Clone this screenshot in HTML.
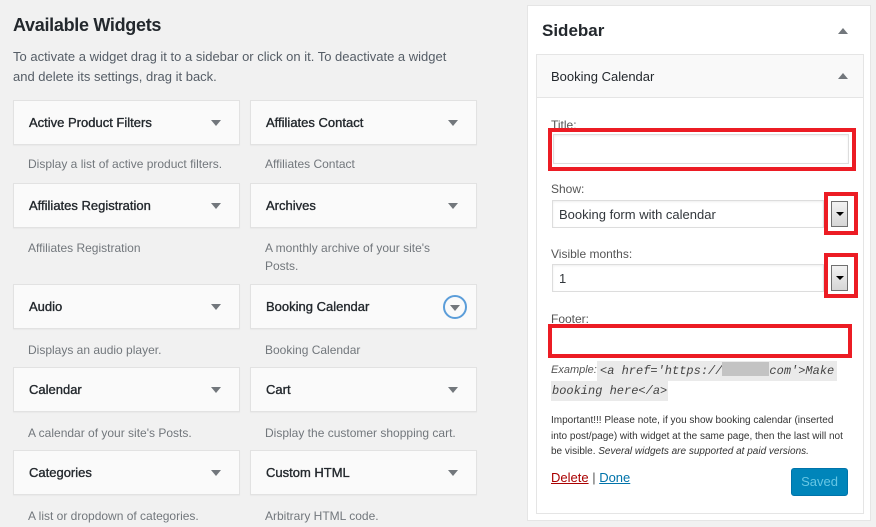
<!DOCTYPE html>
<html><head><meta charset="utf-8"><style>
*{margin:0;padding:0;box-sizing:border-box}
body{width:876px;height:527px;background:#f1f1f1;font-family:"Liberation Sans",sans-serif;color:#23282d;position:relative;overflow:hidden}
.a{position:absolute;white-space:nowrap}
.w{position:absolute;width:227px;height:45px;background:#fafafa;border:1px solid #e2e2e2;box-shadow:0 1px 1px rgba(0,0,0,.04)}
.w span{position:absolute;left:15px;top:14px;font-size:13px;font-weight:normal;color:#23282d;-webkit-text-stroke:0.35px #23282d}
.w i{position:absolute;right:18px;top:19px;width:0;height:0;border-left:5px solid transparent;border-right:5px solid transparent;border-top:6px solid #72777c}
.d{position:absolute;font-size:12px;color:#72777c;line-height:18px}
.red{position:absolute;border:4px solid #ec1c24}
.inp{position:absolute;background:#fff;border:1px solid #ddd;box-shadow:inset 0 1px 2px rgba(0,0,0,.07)}
.lbl{position:absolute;font-size:12px;color:#555}
.btn{position:absolute;width:17px;height:26px;border:1px solid #707070;background:linear-gradient(#f2f2f2,#d6d6d6)}
.btn:after{content:"";position:absolute;left:4px;top:10px;border-left:4px solid transparent;border-right:4px solid transparent;border-top:4px solid #000}
</style></head><body>
<div class="a" style="left:13px;top:15px;font-size:18px;font-weight:bold;letter-spacing:-.3px">Available Widgets</div>
<div class="a" style="left:13px;top:47px;font-size:13px;color:#555d66;line-height:20px">To activate a widget drag it to a sidebar or click on it. To deactivate a widget<br>and delete its settings, drag it back.</div>

<div class="w" style="left:13px;top:100px"><span>Active Product Filters</span><i></i></div>
<div class="w" style="left:250px;top:100px"><span>Affiliates Contact</span><i></i></div>
<div class="d" style="left:28px;top:155px">Display a list of active product filters.</div>
<div class="d" style="left:265px;top:155px">Affiliates Contact</div>

<div class="w" style="left:13px;top:183px"><span>Affiliates Registration</span><i></i></div>
<div class="w" style="left:250px;top:183px"><span>Archives</span><i></i></div>
<div class="d" style="left:28px;top:239px">Affiliates Registration</div>
<div class="d" style="left:265px;top:239px">A monthly archive of your site's<br>Posts.</div>

<div class="w" style="left:13px;top:284px"><span>Audio</span><i></i></div>
<div class="w" style="left:250px;top:284px"><span>Booking Calendar</span><b style="position:absolute;right:9px;top:10px;width:24px;height:24px;border:2px solid #5b9dd9;border-radius:50%"><i style="right:5px;top:8px"></i></b></div>
<div class="d" style="left:28px;top:341px">Displays an audio player.</div>
<div class="d" style="left:265px;top:341px">Booking Calendar</div>

<div class="w" style="left:13px;top:367px"><span>Calendar</span><i></i></div>
<div class="w" style="left:250px;top:367px"><span>Cart</span><i></i></div>
<div class="d" style="left:28px;top:424px">A calendar of your site's Posts.</div>
<div class="d" style="left:265px;top:424px">Display the customer shopping cart.</div>

<div class="w" style="left:13px;top:450px"><span>Categories</span><i></i></div>
<div class="w" style="left:250px;top:450px"><span>Custom HTML</span><i></i></div>
<div class="d" style="left:28px;top:507px">A list or dropdown of categories.</div>
<div class="d" style="left:265px;top:507px">Arbitrary HTML code.</div>

<div style="position:absolute;left:527px;top:5px;width:344px;height:516px;background:#fff;border:1px solid #e5e5e5"></div>
<div class="a" style="left:542px;top:21px;font-size:17px;font-weight:bold">Sidebar</div>
<div class="a" style="left:838px;top:28px;border-left:5px solid transparent;border-right:5px solid transparent;border-bottom:6px solid #72777c"></div>
<div style="position:absolute;left:536px;top:54px;width:328px;height:460px;background:#fff;border:1px solid #e5e5e5"></div>
<div style="position:absolute;left:537px;top:55px;width:326px;height:43px;background:#f9f9f9;border-bottom:1px solid #e5e5e5"></div>
<div class="a" style="left:551px;top:69px;font-size:13px">Booking Calendar</div>
<div class="a" style="left:838px;top:73px;border-left:5px solid transparent;border-right:5px solid transparent;border-bottom:6px solid #72777c"></div>

<div class="lbl" style="left:551px;top:118px">Title:</div>
<div class="inp" style="left:553px;top:134px;width:296px;height:30px"></div>
<div class="red" style="left:548px;top:128px;width:308px;height:43px"></div>

<div class="lbl" style="left:551px;top:182px">Show:</div>
<div class="inp" style="left:552px;top:200px;width:272px;height:28px"><span class="a" style="left:6px;top:6px;font-size:13px;color:#32373c">Booking form with calendar</span></div>
<div class="btn" style="left:831px;top:201px"></div>
<div class="red" style="left:824px;top:192px;width:34px;height:43px"></div>

<div class="lbl" style="left:551px;top:247px">Visible months:</div>
<div class="inp" style="left:552px;top:264px;width:272px;height:28px"><span class="a" style="left:6px;top:6px;font-size:13px;color:#32373c">1</span></div>
<div class="btn" style="left:831px;top:265px"></div>
<div class="red" style="left:824px;top:253px;width:34px;height:45px"></div>

<div class="lbl" style="left:551px;top:312px">Footer:</div>
<div class="red" style="left:548px;top:324px;width:304px;height:34px"></div>

<div class="a" style="left:551px;top:364px;font-size:11px;color:#555;font-style:italic">Example:</div>
<div class="a" style="left:597px;top:361px;background:#eaeaea;font-family:'Liberation Mono',monospace;font-style:italic;font-size:12px;color:#444;padding:1px 3px;height:20px;line-height:18px">&lt;a href='https://<span style="display:inline-block;width:47px;height:14px;background:#c3c3c3;vertical-align:-2px"></span>com'&gt;Make</div>
<div class="a" style="left:551px;top:381px;background:#eaeaea;font-family:'Liberation Mono',monospace;font-style:italic;font-size:12px;color:#444;padding:1px 1px;height:20px;line-height:18px">booking here&lt;/a&gt;</div>

<div class="a" style="left:551px;top:413px;font-size:10px;color:#333;line-height:15.5px">Important!!! Please note, if you show booking calendar (inserted<br>into post/page) with widget at the same page, then the last will not<br>be visible. <i>Several widgets are supported at paid versions.</i></div>

<div class="a" style="left:551px;top:470px;font-size:13px;color:#555"><u style="color:#a00">Delete</u> | <u style="color:#0073aa">Done</u></div>
<div class="a" style="left:791px;top:468px;width:57px;height:28px;background:#0085ba;border:1px solid #0073aa;border-radius:3px;color:#66c6e4;font-size:13px;text-align:center;line-height:26px">Saved</div>
</body></html>
